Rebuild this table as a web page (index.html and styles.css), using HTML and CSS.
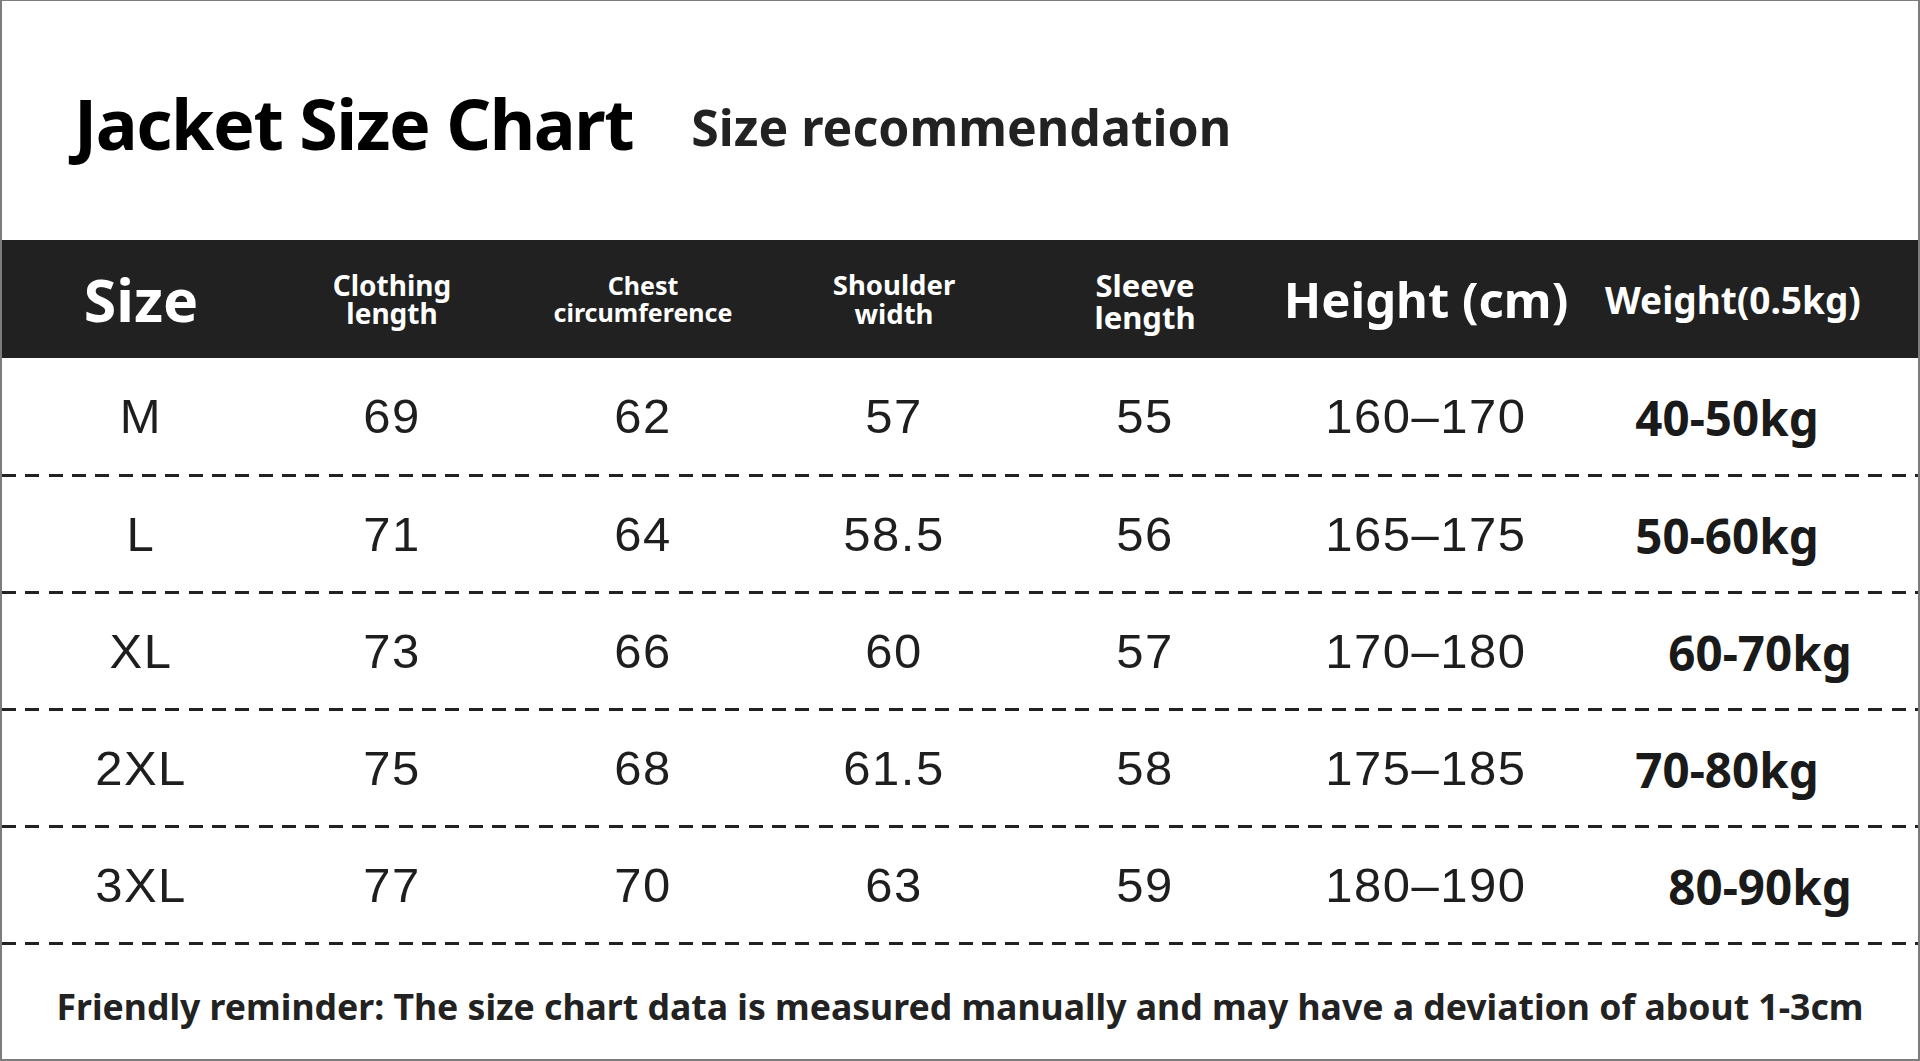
FILE: index.html
```html
<!DOCTYPE html>
<html lang="en">
<head>
<meta charset="utf-8">
<title>Jacket Size Chart</title>
<link rel="stylesheet" href="styles.css">
</head>
<body>
<div class="sheet">
  <div class="title-row">
    <h1 class="title">Jacket Size Chart</h1>
    <h2 class="subtitle">Size recommendation</h2>
  </div>
  <div class="head row">
    <div class="cell h-size">Size</div>
    <div class="cell h-two h-cloth">Clothing<br>length</div>
    <div class="cell h-two h-chest">Chest<br>circumference</div>
    <div class="cell h-two h-shoulder">Shoulder<br>width</div>
    <div class="cell h-two h-sleeve">Sleeve<br>length</div>
    <div class="cell h-height">Height (cm)</div>
    <div class="cell h-weight">Weight(0.5kg)</div>
  </div>
  <div class="body">
    <div class="row data first">
      <div class="cell">M</div><div class="cell">69</div><div class="cell">62</div><div class="cell">57</div><div class="cell">55</div><div class="cell">160–170</div><div class="cell kg">40-50kg</div>
    </div>
    <div class="sep"></div>
    <div class="row data">
      <div class="cell">L</div><div class="cell">71</div><div class="cell">64</div><div class="cell">58.5</div><div class="cell">56</div><div class="cell">165–175</div><div class="cell kg">50-60kg</div>
    </div>
    <div class="sep"></div>
    <div class="row data">
      <div class="cell">XL</div><div class="cell">73</div><div class="cell">66</div><div class="cell">60</div><div class="cell">57</div><div class="cell">170–180</div><div class="cell kg shift">60-70kg</div>
    </div>
    <div class="sep"></div>
    <div class="row data">
      <div class="cell">2XL</div><div class="cell">75</div><div class="cell">68</div><div class="cell">61.5</div><div class="cell">58</div><div class="cell">175–185</div><div class="cell kg">70-80kg</div>
    </div>
    <div class="sep"></div>
    <div class="row data">
      <div class="cell">3XL</div><div class="cell">77</div><div class="cell">70</div><div class="cell">63</div><div class="cell">59</div><div class="cell">180–190</div><div class="cell kg shift">80-90kg</div>
    </div>
    <div class="sep"></div>
  </div>
  <p class="note">Friendly reminder: The size chart data is measured manually and may have a deviation of about 1-3cm</p>
</div>
</body>
</html>
```

FILE: styles.css
```css
* { box-sizing: border-box; }

html, body {
  margin: 0;
  padding: 0;
  background: #ffffff;
}

.sheet {
  width: 1920px;
  height: 1061px;
  border: 2px solid #7c7c7c;
  border-top-width: 1px;
  background: #ffffff;
  display: flex;
  flex-direction: column;
  font-family: "Noto Sans", "Open Sans", sans-serif;
  overflow: hidden;
}

.title-row {
  height: 239px;
  flex: none;
  display: flex;
  align-items: flex-start;
  padding: 87px 0 0 72px;
  gap: 58px;
}

.title {
  margin: 0;
  font-size: 70px;
  line-height: 1;
  font-weight: 700;
  letter-spacing: -1.4px;
  color: #000000;
}

.subtitle {
  margin: 14px 0 0 0;
  font-size: 50px;
  line-height: 1;
  font-weight: 700;
  color: #222222;
}

.row {
  display: grid;
  grid-template-columns: repeat(5, 251px) 311px 291px;
  padding-left: 13.5px;
  align-items: center;
}

.cell {
  text-align: center;
}

.head {
  height: 118px;
  flex: none;
  background: #202120;
  color: #ffffff;
  font-weight: 700;
}

.h-size { font-size: 59px; line-height: 1; }
.h-cloth { font-size: 28px; line-height: 28px; }
.h-chest { font-size: 25px; line-height: 27px; }
.h-shoulder { font-size: 27.5px; line-height: 29px; }
.h-sleeve { font-size: 31px; line-height: 32px; padding-top: 4px; }
.h-height { font-size: 49px; line-height: 1; }
.h-weight { font-size: 37px; line-height: 1; padding-left: 12px; }

.body {
  flex: none;
  display: flex;
  flex-direction: column;
}

.data {
  height: 114px;
  font-family: "Liberation Sans", Arial, sans-serif;
  font-size: 49px;
  line-height: 1;
  letter-spacing: 1.5px;
  color: #1e1e1e;
}

.data.first { height: 116px; }

.kg {
  font-family: "Noto Sans", "Open Sans", sans-serif;
  font-weight: 700;
  font-size: 47.5px;
  letter-spacing: 0;
  color: #1a1a1a;
  padding-top: 4px;
}

.kg.shift { padding-left: 66px; }

.sep {
  height: 3px;
  flex: none;
  background: repeating-linear-gradient(90deg, #222222 0 14px, transparent 14px 23.33px);
}

.note {
  flex: 1;
  margin: 0;
  display: flex;
  align-items: center;
  justify-content: center;
  padding-top: 9px;
  font-size: 35.6px;
  line-height: 1;
  font-weight: 700;
  color: #222222;
}
```
